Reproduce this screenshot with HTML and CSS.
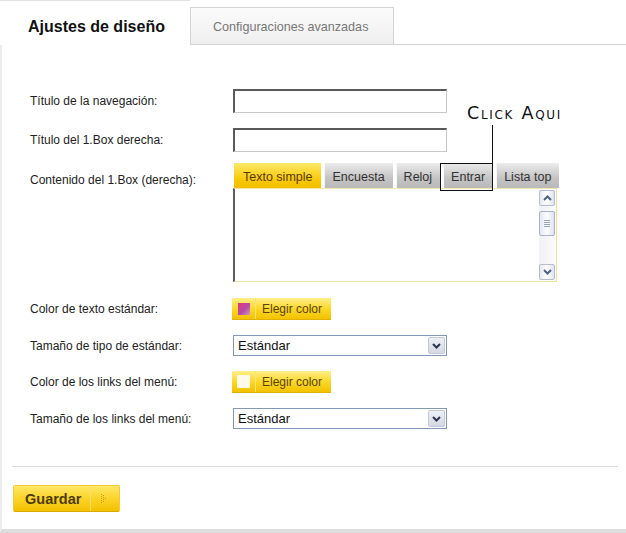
FILE: index.html
```html
<!DOCTYPE html>
<html lang="es">
<head>
<meta charset="UTF-8">
<title>Ajustes de diseño</title>
<link rel="stylesheet" href="styles.css">
</head>
<body>
<div class="panel">
    <div class="panel-tabs">
        <div class="panel-tab active">Ajustes de diseño</div>
        <div class="panel-tab">Configuraciones avanzadas</div>
        <div class="panel-tabs-rest"></div>
    </div>

    <div class="form">
        <div class="row row-text">
            <label class="row-label">Título de la navegación:</label>
            <input class="text-input" type="text">
        </div>
        <div class="row row-text2">
            <label class="row-label">Título del 1.Box derecha:</label>
            <input class="text-input" type="text">
        </div>
        <div class="row row-box">
            <label class="row-label box-label">Contenido del 1.Box (derecha):</label>
            <div class="box-field">
                <div class="box-tabs">
                    <span class="box-tab on">Texto simple</span>
                    <span class="box-tab">Encuesta</span>
                    <span class="box-tab">Reloj</span>
                    <span class="box-tab">Entrar</span>
                    <span class="box-tab">Lista top</span>
                </div>
                <div class="box-body">
                    <div class="box-area"></div>
                    <div class="scroll">
                        <div class="scroll-btn">
                            <svg width="9" height="6" viewBox="0 0 9 6"><path d="M1 5 L4.5 1.5 L8 5" fill="none" stroke="#4d6185" stroke-width="2"/></svg>
                        </div>
                        <div class="scroll-thumb">
                            <span></span><span></span><span></span><span></span>
                        </div>
                        <div class="scroll-track"></div>
                        <div class="scroll-btn">
                            <svg width="9" height="6" viewBox="0 0 9 6"><path d="M1 1 L4.5 4.5 L8 1" fill="none" stroke="#4d6185" stroke-width="2"/></svg>
                        </div>
                    </div>
                </div>
                <div class="hint-text">Click Aqui</div>
                <div class="hint-line"></div>
                <div class="hint-box"></div>
            </div>
        </div>
        <div class="row row-short">
            <label class="row-label">Color de texto estándar:</label>
            <button class="color-btn"><span class="swatch-cell"><span class="swatch pink"></span></span><span class="color-btn-text">Elegir color</span></button>
        </div>
        <div class="row row-short">
            <label class="row-label">Tamaño de tipo de estándar:</label>
            <div class="select-box"><span class="select-text">Estándar</span><span class="select-arrow"><svg width="9" height="6" viewBox="0 0 9 6"><path d="M1 1 L4.5 4.5 L8 1" fill="none" stroke="#2b3550" stroke-width="2"/></svg></span></div>
        </div>
        <div class="row row-short">
            <label class="row-label">Color de los links del menú:</label>
            <button class="color-btn"><span class="swatch-cell"><span class="swatch white"></span></span><span class="color-btn-text">Elegir color</span></button>
        </div>
        <div class="row">
            <label class="row-label">Tamaño de los links del menú:</label>
            <div class="select-box"><span class="select-text">Estándar</span><span class="select-arrow"><svg width="9" height="6" viewBox="0 0 9 6"><path d="M1 1 L4.5 4.5 L8 1" fill="none" stroke="#2b3550" stroke-width="2"/></svg></span></div>
        </div>
    </div>

    <div class="form-foot">
        <button class="save-btn"><span class="save-text">Guardar</span><span class="save-arrow"><svg width="6" height="9" viewBox="0 0 6 9"><g fill="#c99a00"><rect x="0" y="0" width="1" height="1"/><rect x="0" y="2" width="1" height="1"/><rect x="0" y="4" width="1" height="1"/><rect x="0" y="6" width="1" height="1"/><rect x="0" y="8" width="1" height="1"/><rect x="2" y="1" width="1" height="1"/><rect x="2" y="3" width="1" height="1"/><rect x="2" y="5" width="1" height="1"/><rect x="2" y="7" width="1" height="1"/><rect x="4" y="4" width="1" height="1"/></g></svg></span></button>
    </div>
</div>
</body>
</html>
```

FILE: styles.css
```css
body {
    margin: 0;
    padding: 0;
    background: #fff;
    font-family: "Liberation Sans", Arial, sans-serif;
    color: #222;
}
.panel {
    width: 626px;
    height: 533px;
    box-sizing: border-box;
    border-left: 2px solid #ececec;
    border-bottom: 4px solid #dedede;
    position: relative;
}
.panel-tabs {
    display: flex;
    height: 45px;
    margin-left: -2px;
}
.panel-tab {
    box-sizing: border-box;
    width: 204px;
    height: 38px;
    margin-top: 7px;
    border: 1px solid #d4d4d4;
    background: linear-gradient(#fbfbfb, #efefef);
    font-size: 12.6px;
    color: #777;
    padding: 12px 0 0 22px;
}
.panel-tab.active {
    width: 190px;
    height: 45px;
    margin-top: 0;
    border: none;
    border-top: 1px solid #e2e2e2;
    background: #fff;
    font-size: 16px;
    font-weight: bold;
    color: #111;
    padding: 17px 0 0 28px;
}
.panel-tabs-rest {
    flex: 1;
    border-bottom: 1px solid #d0d0d0;
    height: 44px;
}
.form {
    padding: 44px 0 0 28px;
    font-size: 12px;
}
.row {
    display: flex;
    align-items: center;
}
.row-text {
    margin-bottom: 15px;
}
.row-text2 {
    margin-bottom: 11px;
}
.row-box {
    align-items: flex-start;
    margin-bottom: 16px;
}
.row-short {
    margin-bottom: 15px;
}
.row-label {
    width: 203px;
    flex-shrink: 0;
    color: #222;
}
.box-label {
    padding-top: 10px;
}
.text-input {
    box-sizing: border-box;
    width: 214px;
    height: 24px;
    margin: 0;
    border: 1px solid #c8c8c8;
    border-top: 2px solid #5a5a5a;
    border-left: 2px solid #5a5a5a;
    background: #fff;
}
.box-field {
    position: relative;
    width: 324px;
}
.box-tabs {
    display: flex;
    gap: 3px;
    height: 25px;
    padding-left: 1px;
}
.box-tab {
    display: flex;
    align-items: center;
    flex-shrink: 0;
    white-space: nowrap;
    padding: 2px 8px 0 8px;
    font-size: 12.5px;
    color: #333;
    background: linear-gradient(#ececec, #c4c4c4 60%, #b9b9b9);
    box-shadow: inset 1px 0 0 #f6f6f6;
}
.box-tab.on {
    background: linear-gradient(#ffe86a, #f7c800 70%, #f2bd00);
    box-shadow: none;
    color: #5a3b00;
    padding: 2px 9px 0 9px;
}
.box-body {
    box-sizing: border-box;
    display: flex;
    height: 94px;
    border: 1px solid #efe19a;
    border-left: 2px solid #5c5c5c;
    border-top: 1px solid #f4e7a8;
    padding: 1px 1px 1px 0;
}
.box-area {
    flex: 1;
}
.scroll {
    width: 16px;
    display: flex;
    flex-direction: column;
    background: linear-gradient(90deg, #f0f1f6, #fbfbfd);
}
.scroll-btn {
    box-sizing: border-box;
    height: 16px;
    display: flex;
    align-items: center;
    justify-content: center;
    border: 1px solid #b6bdd0;
    border-radius: 2px;
    background: linear-gradient(90deg, #e6e9f2, #ffffff 50%, #dfe3ee);
}
.scroll-thumb {
    box-sizing: border-box;
    height: 25px;
    margin-top: 5px;
    display: flex;
    flex-direction: column;
    align-items: center;
    justify-content: center;
    gap: 1px;
    border: 1px solid #aab3c8;
    border-radius: 2px;
    background: linear-gradient(90deg, #e3e7f1, #fdfdff 50%, #dde2ed);
}
.scroll-thumb span {
    width: 6px;
    height: 1px;
    background: #9aa3b8;
}
.scroll-track {
    flex: 1;
}
.hint-text {
    position: absolute;
    left: 234px;
    top: -60px;
    font-family: "DejaVu Sans", sans-serif;
    font-variant: small-caps;
    font-size: 17.5px;
    letter-spacing: 1.7px;
    color: #111;
    white-space: nowrap;
}
.hint-line {
    position: absolute;
    left: 259px;
    top: -38px;
    width: 1px;
    height: 38px;
    background: #111;
}
.hint-box {
    position: absolute;
    left: 207px;
    top: 0;
    width: 53px;
    height: 28px;
    border: 1px solid #111;
    box-sizing: border-box;
}
.color-btn {
    box-sizing: border-box;
    display: flex;
    align-items: stretch;
    width: 99px;
    height: 22px;
    margin-left: -1px;
    padding: 0;
    border: none;
    border-bottom: 1px solid #e0b200;
    background: linear-gradient(#ffef8a, #fbd82a 50%, #f2c200);
    font-family: inherit;
    cursor: pointer;
}
.swatch-cell {
    width: 23px;
    display: flex;
    align-items: center;
    justify-content: center;
    border-right: 1px solid #f8e27a;
}
.swatch {
    width: 12px;
    height: 12px;
}
.swatch.pink {
    background: linear-gradient(135deg, #e8347a, #b44aa8 55%, #d49ab8);
}
.swatch.white {
    width: 13px;
    height: 13px;
    background: #fffbe8;
    border-radius: 1px;
}
.color-btn-text {
    display: flex;
    align-items: center;
    padding-left: 6px;
    font-size: 12px;
    color: #5a4300;
}
.select-box {
    box-sizing: border-box;
    display: flex;
    align-items: center;
    justify-content: space-between;
    width: 214px;
    height: 21px;
    border: 1px solid #8298b6;
    background: #fff;
    padding: 0 1px 0 4px;
}
.select-text {
    font-size: 13px;
    color: #111;
}
.select-arrow {
    box-sizing: border-box;
    width: 17px;
    height: 17px;
    display: flex;
    align-items: center;
    justify-content: center;
    border: 1px solid #c3c9d8;
    border-radius: 2px;
    background: linear-gradient(#eef0f6, #d4d8e4);
}
.form-foot {
    margin: 37px 8px 0 10px;
    border-top: 1px solid #dcdcdc;
    padding: 18px 0 0 1px;
}
.save-btn {
    box-sizing: border-box;
    display: flex;
    align-items: stretch;
    width: 107px;
    height: 27px;
    padding: 0;
    border: 1px solid #f0cc30;
    border-bottom-color: #d9aa00;
    border-radius: 2px;
    background: linear-gradient(#ffe766, #fbd42a 50%, #f3c100);
    font-family: inherit;
    cursor: pointer;
}
.save-text {
    display: flex;
    align-items: center;
    width: 77px;
    padding-left: 11px;
    box-sizing: border-box;
    font-size: 14.5px;
    font-weight: bold;
    color: #4d3b06;
    border-right: 1px solid #f8df6a;
}
.save-arrow {
    flex: 1;
    display: flex;
    align-items: center;
    padding-left: 10px;
}
```
